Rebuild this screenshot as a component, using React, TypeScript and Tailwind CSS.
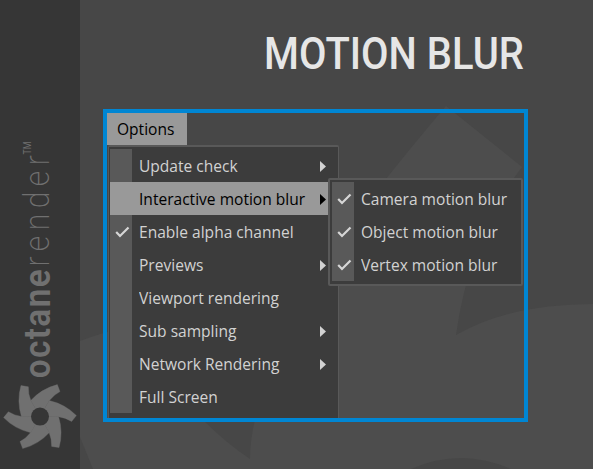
const ARMS = [0, 60, 120, 180, 240, 300];

function Backdrop() {
  return (
    <svg className="absolute inset-0 h-full w-full" viewBox="0 0 593 469" preserveAspectRatio="none">
      <path
        fill="#4d4d4d"
        d="M80 341 C150 315 230 310 300 300 Q345 225 446 106 L522 167 Q470 235 456 335 Q510 304 593 304 V469 H511 Q461 447 411 469 H93 L80 437Z"
      />
      <path fill="#474747" d="M203 420 Q226 443 250 459 Q250 440 255 420Z" />
    </svg>
  );
}

function Brand() {
  return (
    <svg className="h-[469px] w-20" viewBox="0 0 80 469" fill="#707070">
      <g fontFamily="Roboto, sans-serif" transform="rotate(-90)">
        <text transform="translate(-378.3 49.5) scale(.9 1)" fontSize="37" fontWeight="600" textLength="121" lengthAdjust="spacing">octane</text>
        <text transform="translate(-266.5 49) scale(.85 1)" fontSize="35.5" fontWeight="200" textLength="131" lengthAdjust="spacing">render</text>
        <text x="-154.5" y="31" fontSize="11" fontWeight="400" textLength="13" lengthAdjust="spacingAndGlyphs">TM</text>
      </g>
      <g transform="translate(40 416.6) scale(.3333)">
        {ARMS.map((a) => (
          <path key={a} transform={`rotate(${a})`} d="M0 0 L-28 -48 Q5 -84 52 -96 L60 -75 Q41 -65 28 -48Z" stroke="#707070" strokeWidth="1" />
        ))}
        <circle r="27" fill="#363636" />
      </g>
    </svg>
  );
}

function Check() {
  return (
    <svg className="h-[13px] w-[15px]" viewBox="0 0 15 13" fill="none" stroke="#d6d6d6" strokeWidth="2.2">
      <path d="M1.2 7 L5 11 L13.5 2.5" />
    </svg>
  );
}

type Item = { label: string; checked?: boolean; arrow?: boolean; active?: boolean };

const MAIN: Item[] = [
  { label: "Update check", arrow: true },
  { label: "Interactive motion blur", arrow: true, active: true },
  { label: "Enable alpha channel", checked: true },
  { label: "Previews", arrow: true },
  { label: "Viewport rendering" },
  { label: "Sub sampling", arrow: true },
  { label: "Network Rendering", arrow: true },
  { label: "Full Screen" },
];

const SUB: Item[] = [
  { label: "Camera motion blur", checked: true },
  { label: "Object motion blur", checked: true },
  { label: "Vertex motion blur", checked: true },
];

function Row({ item }: { item: Item }) {
  return (
    <div className={`flex h-[33px] items-center ${item.active ? "bg-[#999999] text-black" : "text-[#d2d2d2]"}`}>
      <div className={`flex h-full w-[22px] shrink-0 items-center justify-center pl-[3px] ${item.active ? "" : "bg-[#595959]"}`}>
        {item.checked && <Check />}
      </div>
      <span className="ml-[7px] w-0 grow origin-left whitespace-nowrap">
        <span className="inline-block origin-left scale-x-[.915]">{item.label}</span>
      </span>
      {item.arrow && (
        <svg className="mt-[2px] mr-[11px] h-[11px] w-[6px] shrink-0" viewBox="0 0 6 11" fill="currentColor">
          <path d="M0 0 L6 5.5 L0 11Z" />
        </svg>
      )}
    </div>
  );
}

export default function App() {
  return (
    <div className="relative flex h-[469px] w-[593px] overflow-hidden bg-[#474747] font-['Open_Sans','Noto_Sans',sans-serif] text-[17px] leading-none">
      <Backdrop />
      <aside className="relative w-20 shrink-0 bg-[#363636]">
        <Brand />
      </aside>
      <main className="relative flex grow flex-col pl-[23px]">
        <header className="flex h-[109px] pt-[31px] pl-[161px]">
          <h1 className="origin-left scale-x-[.887] font-['Roboto',sans-serif] text-[45px] leading-[45px] font-medium whitespace-nowrap text-[#e6e6e6]">MOTION BLUR</h1>
        </header>
        <section className="relative flex h-[313px] w-[425px] flex-col border-4 border-[#0086d3]">
          <div className="flex h-8 w-20 items-center bg-[#999999] pb-[2px] pl-[10px] text-black">
            <span className="origin-left scale-x-[.915]">Options</span>
          </div>
          <div className="ml-px h-[273px] w-[231px] rounded-t-xs border-x border-t-2 border-[#595959] bg-[#3c3c3c] px-px pt-[2px]">
            {MAIN.map((item) => <Row key={item.label} item={item} />)}
          </div>
          <div className="absolute top-[65px] left-[221px] h-[108px] w-[195px] rounded-xs border-2 border-[#595959] bg-[#3c3c3c] p-[2px]">
            {SUB.map((item) => <Row key={item.label} item={item} />)}
          </div>
        </section>
      </main>
    </div>
  );
}
